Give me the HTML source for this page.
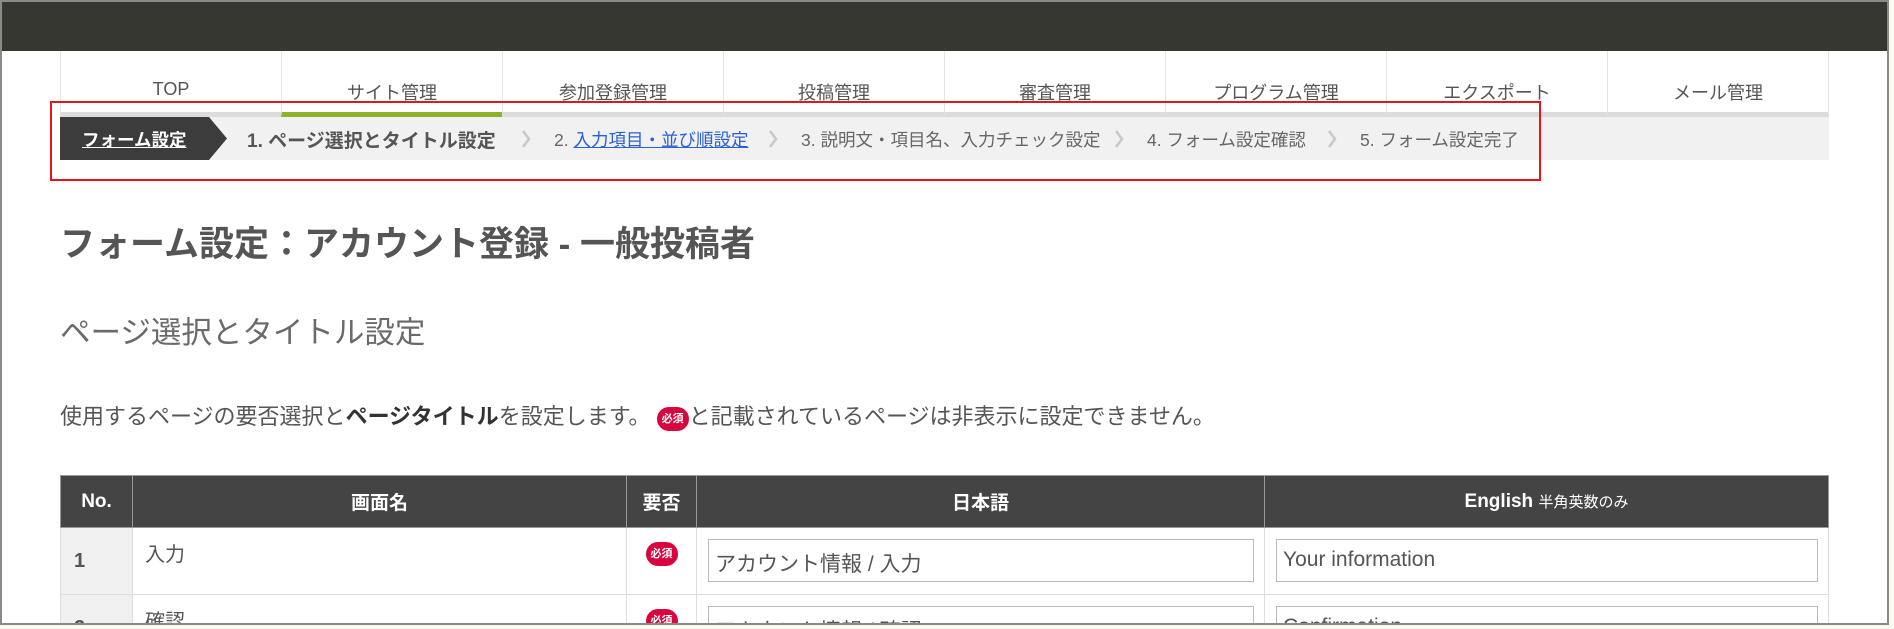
<!DOCTYPE html>
<html><head><meta charset="utf-8"><style>
*{margin:0;padding:0;box-sizing:border-box}
html,body{width:1894px;height:629px;overflow:hidden}
body{background:#fafaf0;font-family:"Liberation Sans","Noto Sans CJK JP",sans-serif;position:relative}
.frame{position:absolute;left:0;top:0;width:1889px;height:625px;background:#fff;border:2px solid #8a8a86;overflow:hidden}
.abs{position:absolute}
.top{left:0;top:0;width:1885px;height:49px;background:#363731}
.nav{left:58px;top:49px;width:1769px;height:62px;display:flex}
.nav div{flex:1;text-align:center;font-size:18px;color:#555;padding-top:28px;border-left:1px solid #e4e4e4;border-bottom:5px solid #dcdcdc;height:66px}
.nav div.on{border-bottom-color:#8cb32a}
.bc{left:58px;top:115px;width:1769px;height:43px;background:#f1f1f1;font-size:17.5px;color:#666;white-space:nowrap}
.bc span{position:absolute;top:10px}
.bc svg.c{position:absolute;top:12px}
.red{left:48px;top:99px;width:1491px;height:80px;border:2.5px solid #e8141c}
h1{position:absolute;left:58px;top:214px;font-size:35px;color:#555;font-weight:bold;white-space:nowrap}
h2{position:absolute;left:58px;top:306px;font-size:30.5px;color:#6a6a6a;font-weight:normal;white-space:nowrap}
p{position:absolute;left:58px;top:397px;font-size:22px;color:#555;white-space:nowrap}
.badge{display:inline-block;width:32px;height:24px;border-radius:12px;background:#d9043d;color:#fff;font-size:11px;font-weight:bold;text-align:center;line-height:24px;vertical-align:2px}
table{position:absolute;left:58px;top:473px;border-collapse:collapse;width:1769px}
th{background:#444;color:#fff;font-size:19px;height:52px;border:1px solid #999}
td{border:1px solid #ddd;height:67px;vertical-align:top;font-size:20px;color:#555}
.inp{border:1px solid #bbb;height:43px;margin:11px 10px 0 11px;padding:8px 6px;font-size:21px;color:#555}
</style></head><body>
<div class="frame">
<div class="abs top"></div>
<div class="abs nav"><div>TOP</div><div class="on">サイト管理</div><div>参加登録管理</div><div>投稿管理</div><div>審査管理</div><div>プログラム管理</div><div>エクスポート</div><div style="border-right:1px solid #e4e4e4">メール管理</div></div>
<div class="abs bc">
<svg class="abs" style="left:0;top:0" width="167" height="43"><polygon points="0,0 149,0 167,21.5 149,43 0,43" fill="#3c3c3c"/></svg>
<span style="left:22px;color:#fff;font-weight:bold;text-decoration:underline">フォーム設定</span>
<span style="left:187px;font-weight:bold;font-size:19px;top:9px;color:#555">1. ページ選択とタイトル設定</span>
<svg class="c" style="left:461px" width="10" height="20"><polyline points="2,2 8,10 2,18" fill="none" stroke="#c8c8c8" stroke-width="2.5"/></svg>
<span style="left:494px">2. <u style="color:#2a5fd6">入力項目・並び順設定</u></span>
<svg class="c" style="left:708px" width="10" height="20"><polyline points="2,2 8,10 2,18" fill="none" stroke="#c8c8c8" stroke-width="2.5"/></svg>
<span style="left:741px">3. 説明文・項目名、入力チェック設定</span>
<svg class="c" style="left:1054px" width="10" height="20"><polyline points="2,2 8,10 2,18" fill="none" stroke="#c8c8c8" stroke-width="2.5"/></svg>
<span style="left:1087px">4. フォーム設定確認</span>
<svg class="c" style="left:1267px" width="10" height="20"><polyline points="2,2 8,10 2,18" fill="none" stroke="#c8c8c8" stroke-width="2.5"/></svg>
<span style="left:1300px">5. フォーム設定完了</span>
</div>
<div class="abs red"></div>
<h1>フォーム設定：アカウント登録 - 一般投稿者</h1>
<h2>ページ選択とタイトル設定</h2>
<p>使用するページの要否選択と<b style="color:#333">ページタイトル</b>を設定します。 <span class="badge">必須</span>と記載されているページは非表示に設定できません。</p>
<table>
<tr><th style="width:72px">No.</th><th style="width:494px">画面名</th><th style="width:70px">要否</th><th style="width:568px">日本語</th><th>English <span style="font-size:15px;font-weight:normal">半角英数のみ</span></th></tr>
<tr><td style="background:#f0f0f0;font-weight:bold;padding:22px 0 0 13px">1</td><td style="padding:10px 0 0 12px">入力</td><td style="text-align:center;padding-top:14px"><span class="badge">必須</span></td><td><div class="inp">アカウント情報 / 入力</div></td><td><div class="inp">Your information</div></td></tr>
<tr><td style="background:#f0f0f0;font-weight:bold;padding:22px 0 0 13px">2</td><td style="padding:10px 0 0 12px">確認</td><td style="text-align:center;padding-top:14px"><span class="badge">必須</span></td><td><div class="inp">アカウント情報 / 確認</div></td><td><div class="inp">Confirmation</div></td></tr>
</table>
</div>
</body></html>
